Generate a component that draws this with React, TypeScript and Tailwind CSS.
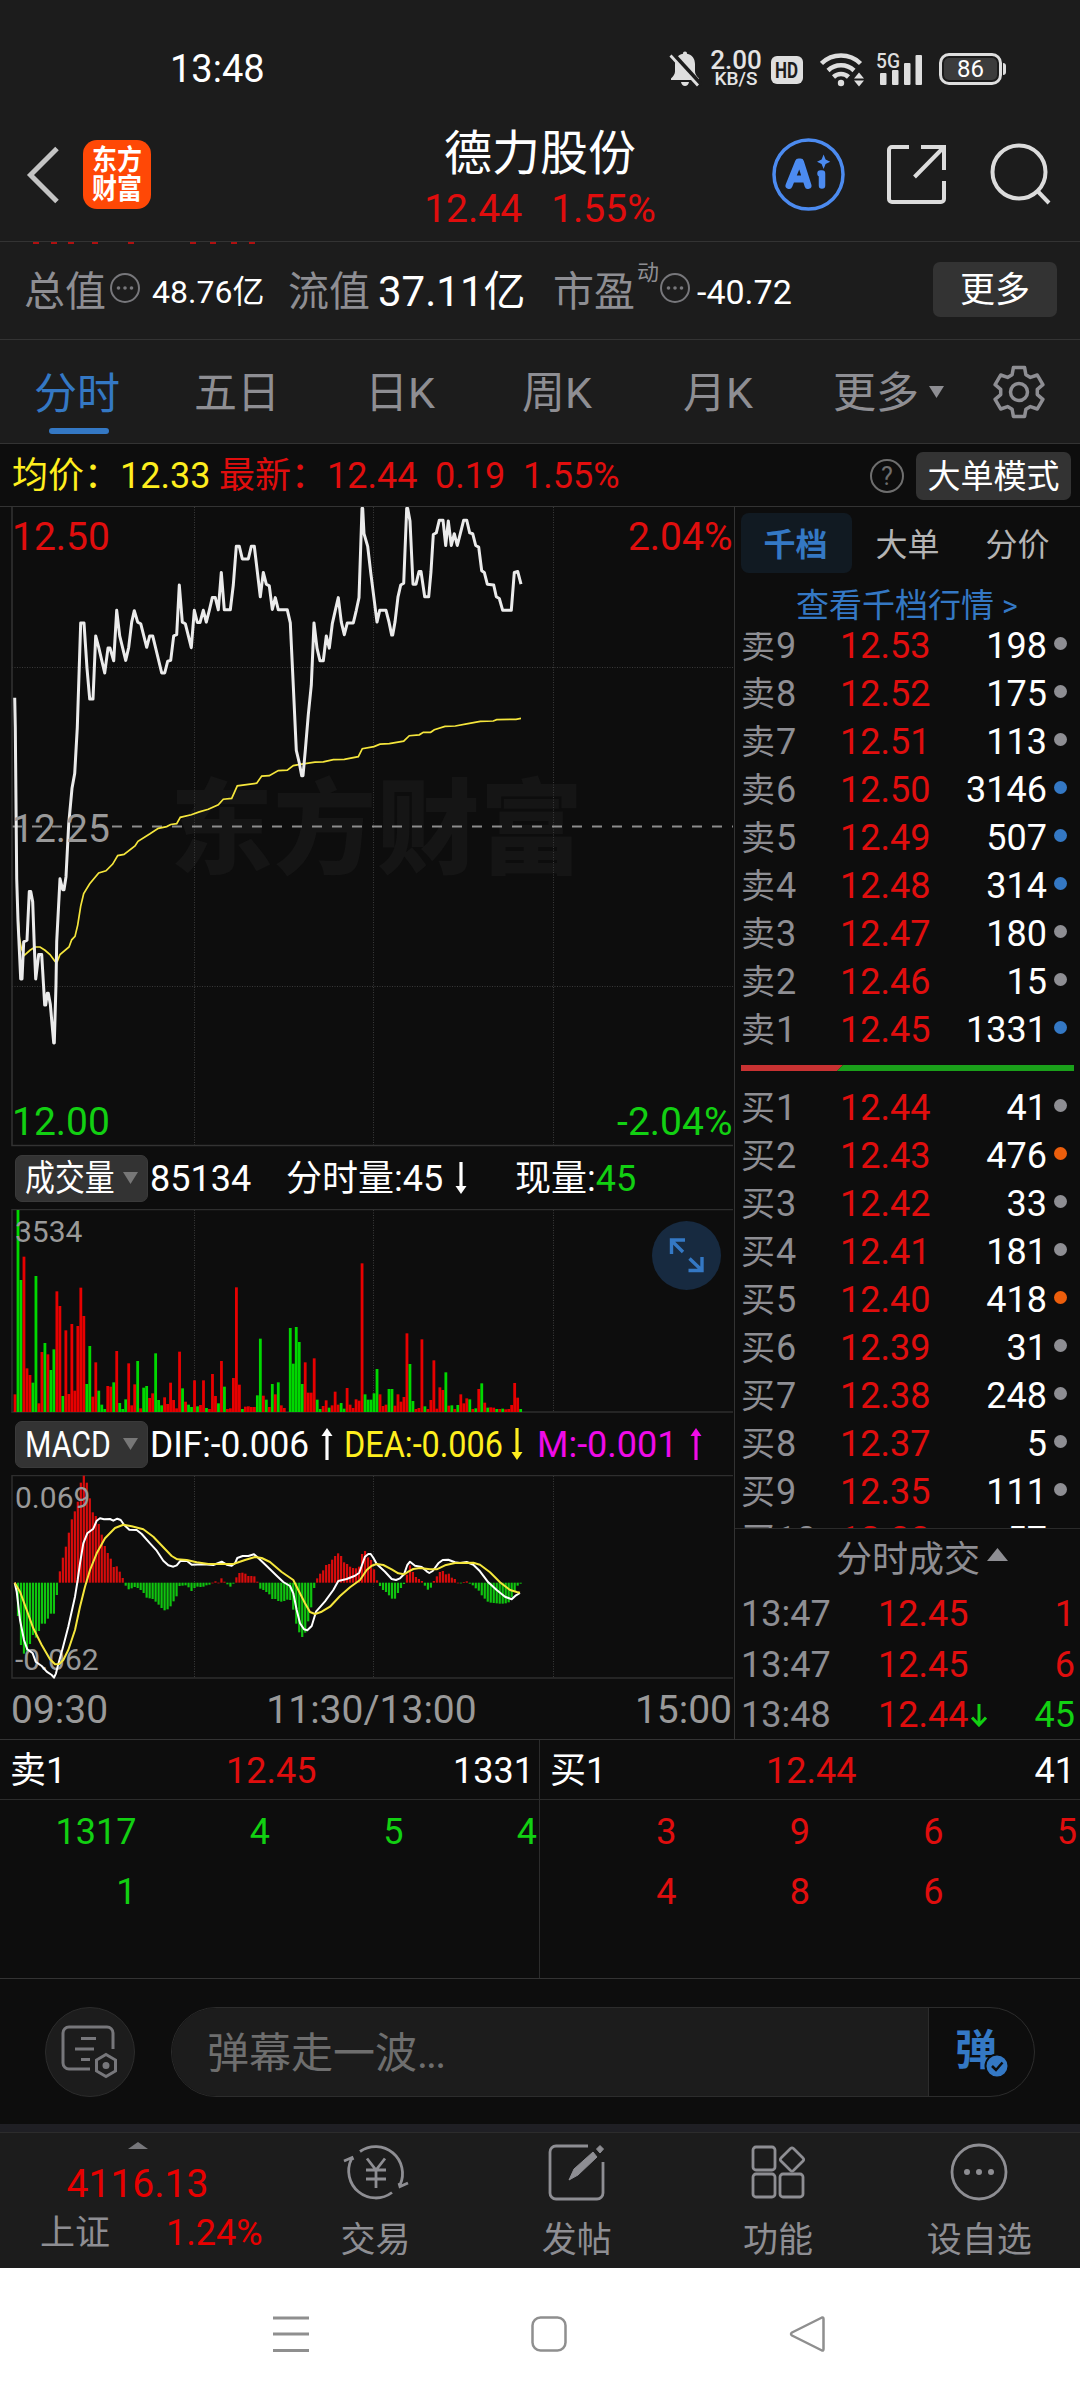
import React from "react";

const RED = "#e00d0d";
const GREEN = "#12d012";

// Intraday price, [x, y] in chart units
const PRICE: number[] = [
  44,470, 46,540, 50,900, 54,1000, 62,1138, 66,1138, 71,1050, 81,1046, 88,930, 92,930, 98,955, 103,1060, 107,1138, 116,1080, 125,1080,
  134,1200, 137,1200, 142,1172, 145,1172, 151,1198, 161,1290, 163,1290, 168,1150, 170,1050, 180,900, 188,926, 192,926, 198,895, 206,770,
  216,685, 224,650, 232,540, 242,292, 252,292, 261,400, 269,473, 279,473, 287,323, 296,350, 314,411, 324,352, 330,352, 341,382, 350,262,
  359,323, 377,381, 386,350, 395,290, 403,263, 413,290, 422,294, 440,350, 449,323, 458,323, 485,411, 494,411, 503,383, 512,381, 521,323,
  530,320, 538,202, 547,290, 556,294, 574,351, 583,262, 592,291, 600,291, 610,262, 619,290, 628,262, 637,232, 646,232, 655,261, 664,172,
  673,261, 691,261, 700,202, 709,110, 718,110, 727,140, 745,140, 754,110, 763,110, 781,230, 790,172, 799,200, 808,204, 817,260, 826,232,
  835,261, 862,261, 871,292, 880,442, 889,595, 898,625, 905,655, 909,655, 916,595, 925,510, 934,440, 942,292, 951,352, 960,382, 970,382,
  979,323, 988,352, 997,294, 1006,262, 1015,232, 1024,290, 1033,320, 1042,292, 1060,292, 1069,262, 1077,232, 1086,20, 1088,20, 1092,80,
  1103,110, 1112,172, 1131,290, 1139,262, 1158,262, 1167,290, 1175,321, 1178,321, 1185,290, 1194,230, 1202,202, 1211,198, 1220,20,
  1223,20, 1230,50, 1239,200, 1248,200, 1257,170, 1263,170, 1274,230, 1286,230, 1293,170, 1300,82, 1309,78, 1318,48, 1329,48, 1337,108,
  1345,50, 1354,108, 1363,80, 1372,108, 1381,80, 1391,48, 1400,48, 1409,78, 1418,80, 1427,108, 1436,112, 1445,168, 1453,172, 1462,200,
  1481,202, 1489,230, 1498,234, 1508,262, 1534,262, 1543,172, 1553,170, 1563,200,
];

const AVERAGE: number[] = [
  54,990, 58,1040, 64,1065, 73,1082, 90,1070, 105,1062, 120,1062, 135,1070, 150,1080, 165,1096, 172,1096, 180,1080, 207,1062, 215,1045,
  225,1037, 233,1010, 242,965, 251,935, 269,912, 296,886, 318,881, 338,865, 353,845, 372,842, 405,822, 414,811, 450,793, 475,780, 500,776,
  512,771, 530,769, 541,754, 574,748, 598,741, 625,735, 655,724, 670,711, 695,709, 712,679, 770,673, 785,656, 808,655, 835,643, 862,642,
  880,631, 900,628, 945,623, 970,622, 1000,617, 1033,616, 1075,610, 1087,591, 1122,586, 1140,580, 1168,579, 1211,573, 1228,560, 1258,558,
  1270,552, 1292,552, 1303,546, 1335,538, 1366,537, 1400,532, 1441,526, 1480,525, 1490,522, 1548,521, 1563,519,
];

// One bar per minute: bar top, negative for a falling minute
const VOLUME: number[] = [
  733,-180,-390,320,655,675,-698,-378,760,606,-579,613,-660,-598,424,468,-738,541,732,522,722,528,413,498,-702,-588,740,637,-722,-764,
  -777,708,710,-697,603,-759,-777,-748,640,766,703,-633,775,-713,-708,744,730,-610,-750,-766,742,762,698,750,775,605,-715,755,-764,-771,
  691,-769,765,691,-774,777,672,738,-760,633,-710,777,775,684,412,704,-777,770,769,771,771,-736,-566,737,-749,771,-702,733,-697,766,
  774,786,-534,-641,-531,-576,-702,637,728,728,625,-749,-777,768,751,-773,766,725,764,-759,-776,714,764,774,748,752,340,-733,-749,-749,
  -730,-657,733,768,764,-717,-717,767,733,755,741,550,-642,-753,777,774,568,-769,777,750,631,776,712,720,-667,767,-766,777,-765,733,
  760,745,-748,777,-775,717,-700,758,-773,772,773,-777,777,-776,778,777,765,699,743,-777,
];

// Histogram ends, zero line at 518
const HISTOGRAM: number[] = [
  518,618,705,731,725,702,675,683,663,641,641,626,611,611,555,484,443,410,368,328,304,275,218,197,218,265,307,318,342,374,
  408,429,446,471,469,485,504,527,538,535,531,534,540,549,563,565,567,575,584,594,601,598,589,574,559,528,527,526,532,543,
  534,530,531,530,526,524,518,514,518,505,515,523,530,521,502,489,488,491,498,498,499,515,536,540,546,553,567,567,573,575,
  573,569,570,599,641,667,681,668,634,592,534,505,491,481,465,462,449,438,430,438,457,462,470,474,475,470,432,423,442,450,
  478,511,528,540,546,556,566,566,549,534,522,494,466,486,501,507,513,527,539,533,513,499,486,483,493,491,503,507,518,520,
  516,514,521,526,535,542,556,566,575,578,579,580,581,581,580,577,562,545,527,521,
];

const DIF: number[] = [
  44,518, 50,545, 60,630, 72,690, 82,718, 98,730, 107,755, 125,768, 140,785, 155,795, 162,803, 168,790, 175,762, 188,715, 205,650,
  225,560, 233,510, 240,460, 250,400, 262,370, 280,356, 290,332, 300,325, 312,328, 330,327, 340,332, 352,326, 362,330, 372,344, 388,359,
  410,360, 425,372, 450,400, 470,422, 490,452, 505,466, 520,470, 530,466, 541,453, 560,452, 575,464, 610,463, 640,465, 665,455, 680,464,
  695,467, 705,460, 712,444, 728,438, 745,438, 762,433, 775,444, 800,468, 830,497, 850,516, 870,528, 880,550, 890,600, 900,640, 912,658,
  922,661, 935,648, 948,605, 975,574, 1000,540, 1015,513, 1040,507, 1065,497, 1078,488, 1086,465, 1095,440, 1105,432, 1112,432, 1120,443,
  1130,462, 1155,485, 1175,507, 1188,510, 1200,505, 1212,493, 1222,465, 1230,455, 1245,467, 1265,471, 1280,484, 1288,489, 1298,483,
  1315,460, 1328,450, 1345,449, 1365,457, 1380,459, 1400,456, 1420,464, 1440,484, 1465,517, 1490,540, 1515,560, 1535,568, 1548,556, 1560,549,
];

const DEA: number[] = [
  44,518, 60,545, 80,600, 100,655, 125,705, 150,748, 165,763, 178,762, 190,750, 205,720, 225,660, 240,590, 255,530, 270,480, 290,430,
  315,385, 345,354, 370,344, 395,349, 430,358, 460,380, 490,412, 515,438, 532,448, 560,450, 590,457, 625,462, 700,462, 735,450, 765,441,
  785,444, 810,456, 845,486, 880,510, 895,540, 915,580, 930,606, 945,612, 965,605, 990,590, 1020,558, 1050,532, 1080,510, 1100,480,
  1115,467, 1130,462, 1150,465, 1175,478, 1195,490, 1212,493, 1225,485, 1240,477, 1260,474, 1290,478, 1310,478, 1335,466, 1365,459,
  1420,458, 1440,464, 1470,487, 1500,517, 1530,540, 1550,546, 1560,548,
];

function toPoints(data: number[], top: number, yScale: number) {
  const out: string[] = [];
  for (let i = 0; i < data.length; i += 2) {
    out.push(`${(data[i] / 3).toFixed(1)},${(top + data[i + 1] / yScale).toFixed(1)}`);
  }
  return out.join(" ");
}

const barX = (i: number) => 15 + i * 2.992;

function VerticalGrid({ y1, y2 }: { y1: number; y2: number }) {
  return (
    <g stroke="#3a3a3a" strokeWidth={1} strokeDasharray="1 1.5">
      {[194.5, 373.5, 553.5].map((x) => (
        <line key={x} x1={x} x2={x} y1={y1} y2={y2} />
      ))}
    </g>
  );
}

function PriceChart() {
  return (
    <svg className="block h-[640px] w-[734px]" viewBox="0 507 734 640">
      <text x={170} y={866} fontSize={103} fontWeight={900} fill="#151515" textLength={413}>东方财富</text>
      <VerticalGrid y1={507} y2={1145} />
      <g stroke="#3a3a3a" strokeWidth={1} strokeDasharray="1 1.5">
        <line x1={12} x2={733} y1={667.5} y2={667.5} />
        <line x1={12} x2={733} y1={986.5} y2={986.5} />
      </g>
      <line x1={12} x2={733} y1={826.5} y2={826.5} stroke="#8c8c8c" strokeWidth={2} strokeDasharray="10 10" />
      <path d="M12 507V1145.5H733" fill="none" stroke="#333" strokeWidth={1.5} />
      <polyline points={toPoints(AVERAGE, 500, 2.376)} fill="none" stroke="#f5e63c" strokeWidth={1.7} />
      <polyline points={toPoints(PRICE, 500, 2.376)} fill="none" stroke="#ebebeb" strokeWidth={3} strokeLinejoin="round" />
      <g fontSize={39}>
        <text x={12} y={549.5} fill={RED}>12.50</text>
        <text x={12} y={842} fill="#999">12.25</text>
        <text x={12} y={1134.5} fill={GREEN}>12.00</text>
        <text x={732.5} y={549.5} fill={RED} textAnchor="end">2.04%</text>
        <text x={732.5} y={1134.5} fill={GREEN} textAnchor="end">-2.04%</text>
      </g>
    </svg>
  );
}

function VolumeChart() {
  return (
    <svg className="block h-[204px] w-[734px]" viewBox="0 1209 734 204">
      <VerticalGrid y1={1210} y2={1412} />
      <path d="M12 1209.5H733M12 1209V1412H733" fill="none" stroke="#2e2e2e" strokeWidth={1.5} />
      {VOLUME.map((v, i) => {
        const top = 1150 + Math.abs(v) / 3;
        return <rect key={i} x={barX(i) - 1.4} y={top} width={2.8} height={1412 - top} fill={v < 0 ? "#00d800" : "#e80000"} />;
      })}
      <text x={15} y={1242} fontSize={30} fill="#999">3534</text>
      <circle cx={686.5} cy={1255.5} r={34.5} fill="#172a40" />
      <path d="M671.5 1254V1240H685M671.5 1240.5L683 1252M702 1257V1270.5H688.5M701.5 1270L689.5 1258.5" fill="none" stroke="#3478c4" strokeWidth={3.4} />
    </svg>
  );
}

function MacdChart() {
  return (
    <svg className="block h-[204px] w-[734px]" viewBox="0 1475 734 204">
      <VerticalGrid y1={1476} y2={1677} />
      <path d="M12 1475.5H733M12 1475V1678H733" fill="none" stroke="#2e2e2e" strokeWidth={1.5} />
      {HISTOGRAM.map((v, i) => {
        const end = 1410 + v / 3;
        const zero = 1582.7;
        return (
          <rect
            key={i}
            x={barX(i) - 1.1}
            y={Math.min(end, zero)}
            width={2.2}
            height={Math.max(Math.abs(end - zero), 0.7)}
            fill={v > 518 ? "#0fc40f" : "#d80c0c"}
          />
        );
      })}
      <g fontSize={30} fill="#999">
        <text x={15} y={1507.5}>0.069</text>
        <text x={15} y={1670}>-0.062</text>
      </g>
      <polyline points={toPoints(DIF, 1410, 3)} fill="none" stroke="#fff" strokeWidth={2} strokeLinejoin="round" />
      <polyline points={toPoints(DEA, 1410, 3)} fill="none" stroke="#f5e63c" strokeWidth={2} strokeLinejoin="round" />
    </svg>
  );
}

function Arrow({ down, className }: { down?: boolean; className: string }) {
  return (
    <svg className={className} width={12} height={32} viewBox="0 0 12 32" fill="currentColor">
      <g transform={down ? "rotate(180 6 16)" : undefined}>
        <path d="M6 0L11.5 8H7.6V32H4.4V8H.5Z" />
      </g>
    </svg>
  );
}

function Caret({ className }: { className: string }) {
  return (
    <svg className={className} width={15} height={12} viewBox="0 0 15 12" fill="currentColor">
      <path d="M0 0H15L7.5 12Z" />
    </svg>
  );
}

function IndicatorButton({ label, scale }: { label: string; scale: string }) {
  return (
    <div className="-mt-[2px] ml-[15px] flex h-[47px] w-[133px] shrink-0 items-center rounded-[7px] border border-[#3a3a3a] bg-[#333] pl-[9px]">
      <span className="w-[98px] shrink-0 pt-[2px]">
        <span className={`inline-block origin-left whitespace-nowrap ${scale}`}>{label}</span>
      </span>
      <Caret className="text-[#777]" />
    </div>
  );
}

type Quote = [string, string, string, string];
const GREY_DOT = "bg-[#8e8e93]";
const BLUE_DOT = "bg-[#3478c4]";
const ORANGE_DOT = "bg-[#ec5e0c]";

const ASKS: Quote[] = [
  ["卖9", "12.53", "198", GREY_DOT],
  ["卖8", "12.52", "175", GREY_DOT],
  ["卖7", "12.51", "113", GREY_DOT],
  ["卖6", "12.50", "3146", BLUE_DOT],
  ["卖5", "12.49", "507", BLUE_DOT],
  ["卖4", "12.48", "314", BLUE_DOT],
  ["卖3", "12.47", "180", GREY_DOT],
  ["卖2", "12.46", "15", GREY_DOT],
  ["卖1", "12.45", "1331", BLUE_DOT],
];

const BIDS: Quote[] = [
  ["买1", "12.44", "41", GREY_DOT],
  ["买2", "12.43", "476", ORANGE_DOT],
  ["买3", "12.42", "33", GREY_DOT],
  ["买4", "12.41", "181", GREY_DOT],
  ["买5", "12.40", "418", ORANGE_DOT],
  ["买6", "12.39", "31", GREY_DOT],
  ["买7", "12.38", "248", GREY_DOT],
  ["买8", "12.37", "5", GREY_DOT],
  ["买9", "12.35", "111", GREY_DOT],
  ["买10", "12.33", "57", GREY_DOT],
];

function QuoteRow({ q }: { q: Quote }) {
  return (
    <div className="flex h-[48px] shrink-0 items-center pl-[6px] pt-[3px] text-[36px]">
      <span className="flex w-[99px] items-center text-[#8e8e93]">
        <span className="w-[35px] text-[34px]">{q[0][0]}</span>
        {q[0].slice(1)}
      </span>
      <span className="w-[100px] text-[#e00d0d]">{q[1]}</span>
      <span className="w-[107px] text-right text-white">{q[2]}</span>
      <span className={`mb-[5px] ml-[7px] h-[13px] w-[13px] rounded-full ${q[3]}`} />
    </div>
  );
}

function Dots({ className }: { className: string }) {
  return (
    <svg className={className} width={32} height={32} viewBox="0 0 32 32" fill="none" stroke="#77777b" strokeWidth={2}>
      <circle cx={16} cy={16} r={14} />
      <g fill="#77777b" stroke="none">
        <circle cx={9.5} cy={16} r={1.8} />
        <circle cx={16} cy={16} r={1.8} />
        <circle cx={22.5} cy={16} r={1.8} />
      </g>
    </svg>
  );
}

function StatusBar() {
  return (
    <div className="flex h-[137px] items-center text-[#e4e4e4]">
      <span className="ml-[170px] w-[498px] text-[38px] text-white">13:48</span>
      <svg width={34} height={38} viewBox="0 0 34 38" fill="#dedede">
        <path d="M17 1.5c1.4 0 2 .9 2 2.2 5.200 1 8 5 8 10.300v7.500c0 2.500 1.500 4.500 4 7v1.500H3v-1.500c2.500-2.500 4-4.500 4-7V14c0-5.300 2.800-9.300 8-10.300 0-1.300.6-2.200 2-2.200Z" />
        <path d="M13 32h8c-.5 2.700-2 4-4 4s-3.500-1.300-4-4Z" />
        <path d="M3 2.500L33 35.500" stroke="#1c1c1c" strokeWidth={5.500} />
        <path d="M2.500 5.500L30 35.500" stroke="#dedede" strokeWidth={2.800} />
      </svg>
      <div className="ml-[6px] flex w-[56px] flex-col items-center font-medium">
        <span className="text-[26px] leading-[20px]">2.00</span>
        <span className="text-[19px] leading-[17px]">KB/S</span>
      </div>
      <div className="ml-[7px] mt-[3px] flex h-[28px] w-[32px] items-center justify-center rounded-[6px] bg-[#dedede] text-[20px] font-bold text-[#1c1c1c]">
        <span className="scale-x-85 scale-y-110">HD</span>
      </div>
      <svg className="ml-[17px]" width={48} height={36} viewBox="0 0 48 36" fill="none" stroke="#dedede" strokeWidth={4.500}>
        <path d="M1.500 12.500a28 28 0 0 1 39 0" />
        <path d="M8 19.500a19 19 0 0 1 26 0" />
        <path d="M13.500 26a11 11 0 0 1 15 0" />
        <circle cx={21} cy={32} r={3.200} fill="#dedede" stroke="none" />
        <path d="M39 21.500l5 6H34ZM39 35.500l5-6H34Z" fill="#dedede" stroke="none" />
      </svg>
      <svg className="ml-[8px]" width={52} height={36} viewBox="0 0 52 36" fill="#dedede">
        <text x={0} y={17} fontSize={21} fontWeight={500} textLength={24} lengthAdjust="spacingAndGlyphs">5G</text>
        <rect x={4} y={22} width={6.500} height={12} rx={1} />
        <rect x={16} y={19} width={6.500} height={15} rx={1} />
        <rect x={28} y={12} width={6.500} height={22} rx={1} />
        <rect x={39.500} y={4} width={6.500} height={30} rx={1} />
      </svg>
      <div className="ml-[11px] flex h-[32px] w-[63px] items-center justify-center rounded-[10px] border-[3px] border-[#dedede] p-[2px]">
        <div className="flex h-full w-full items-center justify-center rounded-[5px] bg-[#3c3c3c] text-[24px] text-white">86</div>
      </div>
      <div className="ml-px h-[12px] w-[3px] rounded-r bg-[#dedede]" />
    </div>
  );
}

function Header() {
  return (
    <div className="flex h-[105px] items-start border-b border-[#333]">
      <svg className="ml-[24px] mt-[9px]" width={36} height={58} viewBox="0 0 36 58" fill="none" stroke="#c4c4c4" strokeWidth={5}>
        <path d="M33 2.500L6.500 29L33 55.500" />
      </svg>
      <div className="ml-[23px] mt-[3px] flex h-[69px] w-[68px] flex-col items-center justify-center rounded-[14px] bg-[#ff4806] text-[25px] font-bold text-white">
        <span className="scale-y-115 leading-[29px]">东方</span>
        <span className="scale-y-115 leading-[29px]">财富</span>
      </div>
      <div className="-mt-[7px] ml-[229px] flex w-[320px] flex-col items-center">
        <span className="text-[48px] text-white">德力股份</span>
        <div className="mt-[12px] flex gap-[29px] text-[39px] text-[#e00d0d]">
          <span>12.44</span>
          <span>1.55%</span>
        </div>
      </div>
      <svg className="ml-[71px]" width={75} height={75} viewBox="0 0 75 75" fill="none" stroke="#4c8bf0" strokeWidth={3.500}>
        <circle cx={37.500} cy={37.500} r={34.500} />
        <g stroke="none" fill="#4c8bf0">
          <path d="M52.600 17.500l2 5 4.600 2.200-4.600 2.200-2 5-2-5-4.600-2.200 4.600-2.200Z" />
        </g>
        <g strokeLinejoin="round" strokeLinecap="round">
          <path d="M18 48.500L27.500 25H29.500L37 48.500M24 42H34" strokeWidth={7} />
          <path d="M49.500 36.500h1.500V48.500" strokeWidth={6.500} />
        </g>
      </svg>
      <svg className="ml-[40px] mt-[7px]" width={62} height={62} viewBox="0 0 62 62" fill="none" stroke="#dcdcdc" strokeWidth={4}>
        <path d="M23 3H6a3 3 0 0 0-3 3V55a3 3 0 0 0 3 3H55a3 3 0 0 0 3-3V37M35 3H58V26M58 3L28.500 33" />
      </svg>
      <svg className="ml-[41px] mt-[6px]" width={64} height={64} viewBox="0 0 64 64" fill="none" stroke="#dcdcdc" strokeWidth={4}>
        <circle cx={30} cy={29} r={26.500} />
        <path d="M48.500 48L60 60" />
      </svg>
    </div>
  );
}

function gearPath() {
  const pts: string[] = [];
  for (let k = 0; k < 6; k++) {
    const ring: [number, number][] = [[-22, 18.5], [-13, 25], [13, 25], [22, 18.5]];
    for (const [offset, r] of ring) {
      const a = ((k * 60 - 90 + offset) * Math.PI) / 180;
      pts.push(`${(27 + r * Math.cos(a)).toFixed(1)} ${(27 + r * Math.sin(a)).toFixed(1)}`);
    }
  }
  return `M${pts.join("L")}Z`;
}

function InfoRow() {
  const edges = ["ml-[33px]", "ml-[12px]", "ml-[11px]", "ml-[18px]", "ml-[30px]", "ml-[56px]", "ml-[14px]", "ml-[15px]", "ml-[12px]"];
  return (
    <div className="h-[98px] border-b border-[#333]">
      {/* Lower edge of the price line that is scrolled under the header */}
      <div className="flex h-[2px]">
        {edges.map((m, n) => <i key={n} className={`h-[2px] w-[6px] bg-[#b01010] ${m}`} />)}
      </div>
      <div className="flex h-[94px] items-center text-white">
        <span className="ml-[24px] mt-[2px] w-[84px] text-[41px] text-[#8e8e93]">总值</span>
        <Dots className="mb-[7px] ml-px" />
        <span className="ml-[11px] mt-px w-[136px] text-[32px]">48.76亿</span>
        <span className="mt-[2px] w-[90px] text-[41px] text-[#8e8e93]">流值</span>
        <span className="mt-[2px] w-[175px] text-[42px]">37.11亿</span>
        <span className="mt-[2px] w-[84px] text-[41px] text-[#8e8e93]">市盈</span>
        <span className="mb-[36px] w-[22px] text-[22px] text-[#8e8e93]">动</span>
        <Dots className="mb-[7px]" />
        <span className="ml-[6px] mt-px w-[236px] text-[34px]">-40.72</span>
        <span className="mb-[4px] flex h-[55px] w-[124px] items-center justify-center rounded-[7px] bg-[#333] pt-[2px] text-[35px]">更多</span>
      </div>
    </div>
  );
}

function Tabs() {
  return (
    <div className="flex h-[104px] items-center border-b border-[#333] pt-[4px] text-[43px] text-[#8e8e93]">
      <div className="ml-[34px] flex w-[160px] flex-col text-[#3478c4]">
        <span className="mt-[20px]">分时</span>
        <span className="ml-[15px] mt-[12px] h-[6px] w-[60px] rounded-full bg-[#3478c4]" />
      </div>
      <span className="w-[171px]">五日</span>
      <span className="w-[157px]">日K</span>
      <span className="w-[161px]">周K</span>
      <span className="w-[150px]">月K</span>
      <span className="w-[96px]">更多</span>
      <Caret className="mb-[4px] shrink-0" />
      <svg className="mb-[4px] ml-[48px] shrink-0" width={54} height={54} viewBox="0 0 54 54" fill="none" stroke="#8e8e93" strokeWidth={3.500} strokeLinejoin="round">
        <path d={gearPath()} />
        <circle cx={27} cy={27} r={8.500} />
      </svg>
    </div>
  );
}

function AverageRow() {
  return (
    <div className="flex h-[63px] items-center border-b border-[#333] pt-[2px] text-[36px]">
      <span className="ml-[12px] w-[108px] text-[#ffee1e]">均价：</span>
      <span className="w-[99px] text-[#ffee1e]">12.33</span>
      <span className="w-[108px] text-[#e00d0d]">最新：</span>
      <span className="w-[108px] text-[#e00d0d]">12.44</span>
      <span className="w-[88px] text-[#e00d0d]">0.19</span>
      <span className="w-[347px] text-[#e00d0d]">1.55%</span>
      <span className="flex h-[34px] w-[34px] items-center justify-center rounded-full border-[2.5px] border-[#6e6e6e] text-[25px] text-[#6e6e6e]">?</span>
      <span className="ml-[12px] flex h-[48px] w-[155px] items-center justify-center rounded-[7px] bg-[#333] pt-px text-[33px] text-white">大单模式</span>
    </div>
  );
}

function ChartColumn() {
  return (
    <div className="flex w-[735px] flex-col border-r border-[#333]">
      <PriceChart />
      <div className="flex h-[62px] items-center pt-[2px] text-[36px] text-white">
        <IndicatorButton label="成交量" scale="scale-x-[0.83]" />
        <span className="ml-[2px] w-[136px]">85134</span>
        <span className="w-[169px]">分时量:45</span>
        <Arrow down className="mb-[2px]" />
        <span className="ml-[48px]">现量:</span>
        <span className="text-[#12d012]">45</span>
      </div>
      <VolumeChart />
      <div className="flex h-[62px] items-center whitespace-nowrap pt-[2px] text-[36px] text-white">
        <IndicatorButton label="MACD" scale="scale-x-[0.84]" />
        <span className="ml-[2px] w-[171px]"><span className="inline-block origin-left scale-x-[0.98]">DIF:-0.006</span></span>
        <Arrow className="mb-[2px] shrink-0" />
        <span className="ml-[11px] w-[167px] text-[#ffee1e]"><span className="inline-block origin-left scale-x-[0.9]">DEA:-0.006</span></span>
        <Arrow down className="mb-[2px] shrink-0 text-[#ffee1e]" />
        <span className="ml-[14px] w-[153px] text-[#f00be8]"><span className="inline-block origin-left">M:-0.001</span></span>
        <Arrow className="mb-[2px] shrink-0 text-[#f00be8]" />
      </div>
      <MacdChart />
      <div className="flex h-[60px] items-center justify-between pl-[11px] pr-[2px] pt-[2px] text-[39px] text-[#999]">
        <span>09:30</span>
        <span>11:30/13:00</span>
        <span>15:00</span>
      </div>
    </div>
  );
}

function OrderBook() {
  const trades = [
    ["13:47", "12.45", "1"],
    ["13:47", "12.45", "6"],
    ["13:48", "12.44", "45"],
  ];
  return (
    <div className="flex w-[345px] flex-col">
      <div className="flex h-[66px] items-start pl-[6px] pt-[6px] text-[32px] text-[#b4b4b4]">
        <span className="flex h-[60px] w-[111px] items-center justify-center rounded-[8px] bg-[#111a22] pr-[2px] pt-[3px] font-bold text-[#3478c4]">千档</span>
        <span className="flex h-[60px] w-[111px] items-center justify-center pt-[3px]">大单</span>
        <span className="flex h-[60px] w-[111px] items-center justify-center pr-[2px] pt-[3px]">分价</span>
      </div>
      <div className="flex h-[59px] items-center pl-[61px] pt-[7px] text-[33px] text-[#3478c4]">
        <span className="w-[206px]">查看千档行情</span>
        <span className="text-[30px]">&gt;</span>
      </div>
      <div className="flex h-[421px] flex-col justify-end overflow-hidden">
        {ASKS.map((q) => <QuoteRow key={q[0]} q={q} />)}
      </div>
      <div className="flex h-[30px] items-center pl-[6px]">
        <svg width={333} height={6} viewBox="0 0 333 6">
          <path d="M0 0H102L96 6H0Z" fill="#c83232" />
          <path d="M102 0H333V6H96Z" fill="#1aa01a" />
        </svg>
      </div>
      <div className="flex h-[446px] flex-col overflow-hidden">
        {BIDS.map((q) => <QuoteRow key={q[0]} q={q} />)}
      </div>
      <div className="flex h-[58px] items-center border-t border-[#2a2a2a] pl-[101px] pt-[4px] text-[36px] text-[#8e8e93]">
        <span>分时成交</span>
        <svg className="mb-[10px] ml-[7px]" width={21} height={13} viewBox="0 0 21 13" fill="#8e8e93"><path d="M10.500 0L21 13H0Z" /></svg>
      </div>
      {trades.map(([time, price, size], i) => (
        <div key={i} className="flex h-[51px] items-center pl-[6px] pt-[4px] text-[36px]">
          <span className="w-[137px] text-[#8e8e93]">{time}</span>
          <span className="w-[93px] text-[#e00d0d]">{price}</span>
          <span className="w-[17px]">
            {i === 2 && (
              <svg width={16} height={23} viewBox="0 0 16 23" fill="none" stroke={GREEN} strokeWidth={3}>
                <path d="M8 0V21M1 13.500L8 21L15 13.500" />
              </svg>
            )}
          </span>
          <span className={i === 2 ? "w-[87px] text-right text-[#12d012]" : "w-[87px] text-right text-[#e00d0d]"}>{size}</span>
        </div>
      ))}
    </div>
  );
}

function Level({ side, price, size, rows, tone, edge }: { side: string; price: string; size: string; rows: string[][]; tone: string; edge: string }) {
  return (
    <div className="w-[540px] text-[36px]">
      <div className={`flex h-[60px] items-center border-b border-[#2c2c2c] pl-[10px] pt-[2px] text-white ${edge}`}>
        <span className="w-[216px]">{side}</span>
        <span className="grow text-[#e00d0d]">{price}</span>
        <span>{size}</span>
      </div>
      {rows.map((row, i) => (
        <div key={i} className={`grid h-[60px] w-[537px] grid-cols-4 items-center pl-[3px] pt-[3px] text-right ${tone}`}>
          {row.map((n, j) => <span key={j}>{n}</span>)}
        </div>
      ))}
    </div>
  );
}

function CommentBar() {
  return (
    <div className="flex h-[145px] items-center">
      <div className="ml-[45px] flex h-[90px] w-[90px] items-center justify-center rounded-full border border-[#2c2c2c] bg-[#1c1c1c]">
        <svg width={58} height={54} viewBox="0 0 58 54" fill="none" stroke="#77777b" strokeWidth={3}>
          <path d="M52 24V8a6 6 0 0 0-6-6H8a6 6 0 0 0-6 6V38a6 6 0 0 0 6 6H29M20 13.500H35M14 24H33M20 34.500H29" />
          <path d="M45 29.500l9.500 5.500v11L45 51.500l-9.500-5.500V35Z" />
          <circle cx={45} cy={40.500} r={2} fill="#77777b" />
        </svg>
      </div>
      <div className="ml-[36px] flex h-[90px] w-[864px] items-center overflow-hidden rounded-full border border-[#2c2c2c] text-[42px]">
        <div className="flex h-full w-[756px] items-center bg-[#1c1c1c] pl-[35px] pt-[4px] text-[#6e6e6e]">
          弹幕走一波<span className="tracking-[-2px]">...</span>
        </div>
        <div className="flex h-full grow items-center border-l border-[#2c2c2c] pl-[26px]">
          <span className="relative mb-px font-bold text-[#3478c4]">
            弹
            <svg className="absolute left-[29px] top-[23px]" width={26} height={26} viewBox="0 0 26 26">
              <circle cx={13} cy={13} r={11.500} fill="#3478c4" stroke="#0d0d0d" strokeWidth={2} />
              <path d="M8 13l4 4 6.500-7.500" fill="none" stroke="#0d0d0d" strokeWidth={2.500} />
            </svg>
          </span>
        </div>
      </div>
    </div>
  );
}

function NavItem({ label, children }: { label: string; children: React.ReactNode }) {
  return (
    <div className="flex w-[201.500px] flex-col items-center text-[35px] text-[#8e8e93]">
      <svg className="mt-[7px]" width={66} height={64} viewBox="0 0 66 64" fill="none" stroke="#8e8e93" strokeWidth={2.800}>
        {children}
      </svg>
      <span className="mt-[19px]">{label}</span>
    </div>
  );
}

function BottomNav() {
  return (
    <div className="flex h-[136px] border-t border-[#2c2c2c] bg-[#1c1c1c]">
      <div className="flex w-[275px] flex-col items-center">
        <svg className="mt-[9px]" width={20} height={7} viewBox="0 0 20 7" fill="#77777b"><path d="M10 0L20 7H0Z" /></svg>
        <span className="mt-[16px] text-[39px] text-[#e80000]">4116.13</span>
        <div className="mt-[11px] flex w-[275px] items-center text-[36px]">
          <span className="ml-[40px] w-[126px] text-[35px] text-[#8e8e93]">上证</span>
          <span className="text-[#e80000]">1.24%</span>
        </div>
      </div>
      <NavItem label="交易">
        <path d="M17 11.500A27 27 0 0 1 57 45M49 52.500A27 27 0 0 1 8.500 19M1 21L9 17.500L10 20M65 43L57 46.500L56 43" />
        <path d="M24 18.500L33 30L42 18.500M33 30V48M23 30H43M23 39H43" />
      </NavItem>
      <NavItem label="发帖">
        <path d="M44 6H12a6 6 0 0 0-6 6V53a6 6 0 0 0 6 6H53a6 6 0 0 0 6-6V22" />
        <path d="M25 40L30 29L49 12L53 17L34 35ZM52.500 9L56 5.500L59.500 9L56 13Z" fill="#8e8e93" strokeWidth={1} />
      </NavItem>
      <NavItem label="功能">
        <rect x={8} y={7} width={22} height={23} rx={3} />
        <rect x={8} y={34} width={22} height={23} rx={3} />
        <rect x={35} y={34} width={23} height={23} rx={3} />
        <path d="M45.500 8.500a2.500 2.500 0 0 1 3 0L58 18a2 2 0 0 1 0 3L48.500 30.500a2.500 2.500 0 0 1-3 0L36 21a2 2 0 0 1 0-3Z" />
      </NavItem>
      <NavItem label="设自选">
        <circle cx={33} cy={32} r={27} />
        <g fill="#8e8e93" stroke="none">
          <circle cx={21} cy={32} r={3} />
          <circle cx={33} cy={32} r={3} />
          <circle cx={45} cy={32} r={3} />
        </g>
      </NavItem>
    </div>
  );
}

function SystemNav() {
  return (
    <div className="flex h-[132px] items-center bg-white">
      <svg className="ml-[272px]" width={38} height={38} viewBox="0 0 38 38" stroke="#8f8f8f" strokeWidth={2.800}>
        <path d="M1 3H37M1 19H37M1 35.500H37" />
      </svg>
      <svg className="ml-[220px]" width={38} height={38} viewBox="0 0 38 38" fill="none" stroke="#8f8f8f" strokeWidth={2.500}>
        <rect x={2.500} y={2.500} width={33} height={33} rx={8} />
      </svg>
      <svg className="ml-[221px]" width={38} height={38} viewBox="0 0 38 38" fill="none" stroke="#8f8f8f" strokeWidth={2.500} strokeLinejoin="round">
        <path d="M33 2.500Q34.500 2 34.500 4V34Q34.500 36 33 35.500L3 20.500Q1 19 3 17.500Z" />
      </svg>
    </div>
  );
}

export default function App() {
  return (
    <div className="h-[2400px] w-[1080px] overflow-hidden bg-[#0d0d0d] font-[Roboto,'Noto_Sans_CJK_SC',sans-serif] leading-none">
      <div className="bg-[#1c1c1c] [&_span]:whitespace-nowrap">
        <StatusBar />
        <Header />
        <InfoRow />
        <Tabs />
      </div>
      <AverageRow />
      <div className="flex h-[1232px]">
        <ChartColumn />
        <OrderBook />
      </div>
      <div className="flex h-[240px] border-y border-[#333]">
        <Level side="卖1" price="12.45" size="1331" edge="pr-[6px]" tone="text-[#12d012]" rows={[["1317", "4", "5", "4"], ["1", "", "", ""]]} />
        <div className="-ml-px w-px bg-[#2c2c2c]" />
        <Level side="买1" price="12.44" size="41" edge="pr-[5px]" tone="text-[#e00d0d]" rows={[["3", "9", "6", "5"], ["4", "8", "6", ""]]} />
      </div>
      <CommentBar />
      <div className="h-[8px] bg-[#1f1f24]" />
      <BottomNav />
      <SystemNav />
    </div>
  );
}
